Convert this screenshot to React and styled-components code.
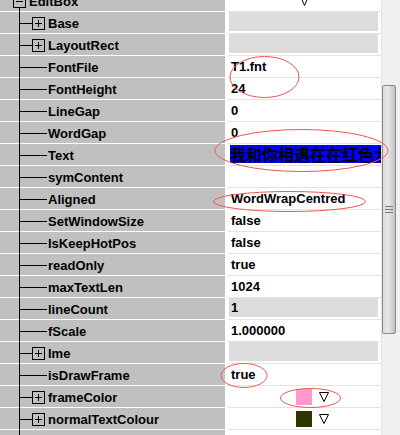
import React from "react";
import styled, { createGlobalStyle } from "styled-components";

const GlobalStyle = createGlobalStyle`
  html, body {
    margin: 0;
    padding: 0;
    background: #fff;
  }
  body {
    font-family: "Liberation Sans", Arial, sans-serif;
  }
`;

const Page = styled.div`
  position: relative;
  width: 400px;
  height: 435px;
  overflow: hidden;
  display: grid;
  grid-template-columns: 381px 19px;
  background: #fff;
`;

const Grid = styled.div`
  margin-top: -10px;
  display: flex;
  flex-direction: column;
`;

const Row = styled.div`
  display: grid;
  grid-template-columns: 225px 1fr;
  height: 22px;
`;

const NameCell = styled.div`
  height: 22px;
  box-sizing: border-box;
  display: flex;
  align-items: center;
  padding-left: ${({ $root }) => ($root ? "13px" : "20px")};
  font-weight: bold;
  font-size: 13px;
  color: #000;
  white-space: nowrap;
  background:
    linear-gradient(#000, #000) 19px 100% /
      1px ${({ $root }) => ($root ? "5px" : "100%")} no-repeat,
    linear-gradient(#fff, #fff) 0 100% / 100% 1px no-repeat,
    #c0c0c0;
`;

const Connector = styled.span`
  flex: none;
  width: ${({ $leaf }) => ($leaf ? "27px" : "12px")};
  height: 1px;
  background: #000;
`;

const Label = styled.span`
  margin-left: ${({ $leaf }) => ($leaf ? "1px" : "3px")};
`;

const ValueCell = styled.div`
  height: 22px;
  box-sizing: border-box;
  margin-left: 3px;
  border-bottom: 1px solid #e3e3e3;
  display: flex;
  align-items: center;
  justify-content: ${({ $center }) => ($center ? "center" : "flex-start")};
  overflow: hidden;
  white-space: nowrap;
  font-weight: bold;
  font-size: 13px;
  color: #000;
`;

const Value = styled.span`
  padding-left: 3px;
`;

const Disabled = styled.div`
  align-self: flex-start;
  flex: 1;
  height: 19px;
  margin: 0 3px 0 1px;
  padding-left: 2px;
  display: flex;
  align-items: center;
  background: #dcdcdc;
`;

const Highlight = styled.span`
  align-self: flex-start;
  margin: 1px 0 0 2px;
  height: 18px;
  line-height: 18px;
  background: #0000ff;
  color: #000;
  font-family: "Noto Sans CJK SC", sans-serif;
  font-size: 16px;
  font-weight: bold;
`;

const ColorPick = styled.div`
  display: flex;
  align-items: center;
  gap: 7px;
  padding-left: 68px;
`;

const Swatch = styled.span`
  width: 16px;
  height: 16px;
  background: ${({ $color }) => $color};
`;

const Track = styled.div`
  background: #f0f0f0;
  border-left: 1px solid #e4e4e4;
  display: flex;
  flex-direction: column;
`;

const Thumb = styled.div`
  margin-top: 85px;
  width: 14px;
  height: 249px;
  box-sizing: border-box;
  border: 1px solid #8c8c8c;
  border-radius: 2px;
  background: linear-gradient(to right, #dadada, #e8e8e8 40%, #cfcfcf 80%, #bdbdbd);
  display: flex;
  align-items: center;
  justify-content: center;
`;

const Grip = styled.span`
  width: 8px;
  height: 7px;
  background: repeating-linear-gradient(#777 0 1px, transparent 1px 3px);
`;

const Overlay = styled.svg`
  position: absolute;
  left: 0;
  top: 0;
  pointer-events: none;
`;

const Expander = ({ open }) => (
  <svg width="13" height="13" shapeRendering="crispEdges" style={{ flex: "none" }}>
    <rect x="0.5" y="0.5" width="12" height="12" fill="none" stroke="#000" />
    <path d={open ? "M3 6.5H10" : "M3 6.5H10M6.5 3V10"} stroke="#000" />
  </svg>
);

const Drop = ({ w = 10 }) => (
  <svg width={w} height="10">
    <path d={`M0.5 0.5H${w - 0.5}L${w / 2} 9.5Z`} fill="none" stroke="#000" />
  </svg>
);

const rows = [
  { name: "Base", expand: true, disabled: true },
  { name: "LayoutRect", expand: true, disabled: true },
  { name: "FontFile", value: "T1.fnt" },
  { name: "FontHeight", value: "24" },
  { name: "LineGap", value: "0" },
  { name: "WordGap", value: "0" },
  { name: "Text", text: "我和你相遇在在红色龙舟" },
  { name: "symContent", value: "" },
  { name: "Aligned", value: "WordWrapCentred" },
  { name: "SetWindowSize", value: "false" },
  { name: "IsKeepHotPos", value: "false" },
  { name: "readOnly", value: "true" },
  { name: "maxTextLen", value: "1024" },
  { name: "lineCount", value: "1", disabled: true },
  { name: "fScale", value: "1.000000" },
  { name: "Ime", expand: true, disabled: true },
  { name: "isDrawFrame", value: "true" },
  { name: "frameColor", expand: true, color: "#ff99cc" },
  { name: "normalTextColour", expand: true, color: "#333300" },
  { name: "", expand: true },
];

const marks = [
  [264.5, 77, 34.5, 20.5],
  [301.5, 150.5, 86.5, 21],
  [289.5, 201.5, 76, 10],
  [244, 375.5, 23, 12],
  [310.5, 398, 30, 9.5],
];

const renderValue = (r) => {
  if (r.disabled) return <Disabled>{r.value}</Disabled>;
  if (r.text) return <Highlight>{r.text}</Highlight>;
  if (r.color)
    return (
      <ColorPick>
        <Swatch $color={r.color} />
        <Drop />
      </ColorPick>
    );
  return <Value>{r.value}</Value>;
};

export default function App() {
  return (
    <>
      <GlobalStyle />
      <Page>
        <Grid>
          <Row>
            <NameCell $root>
              <Expander open />
              <Label>EditBox</Label>
            </NameCell>
            <ValueCell $center>
              <Drop w={9} />
            </ValueCell>
          </Row>
          {rows.map((r, i) => (
            <Row key={i}>
              <NameCell>
                <Connector $leaf={!r.expand} />
                {r.expand && <Expander />}
                <Label $leaf={!r.expand}>{r.name}</Label>
              </NameCell>
              <ValueCell>{renderValue(r)}</ValueCell>
            </Row>
          ))}
        </Grid>
        <Track>
          <Thumb>
            <Grip />
          </Thumb>
        </Track>
        <Overlay width="400" height="435">
          {marks.map(([cx, cy, rx, ry], i) => (
            <ellipse key={i} cx={cx} cy={cy} rx={rx} ry={ry} fill="none" stroke="#f05454" strokeWidth="1" />
          ))}
        </Overlay>
      </Page>
    </>
  );
}
